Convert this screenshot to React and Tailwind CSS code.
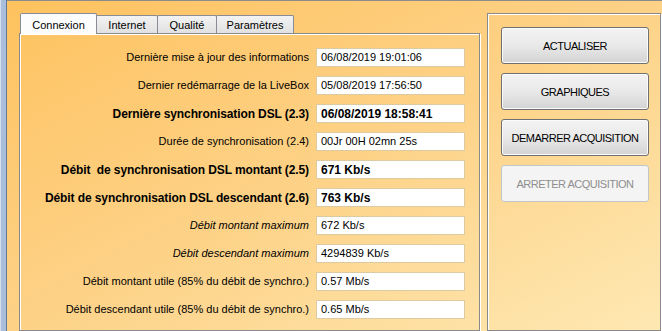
import React from 'react';

const rows = [
  { label: 'Dernière mise à jour des informations', value: '06/08/2019 19:01:06' },
  { label: 'Dernier redémarrage de la LiveBox', value: '05/08/2019 17:56:50' },
  { label: 'Dernière synchronisation DSL (2.3)', value: '06/08/2019 18:58:41', bold: true },
  { label: 'Durée de synchronisation (2.4)', value: '00Jr 00H 02mn 25s' },
  { label: 'Débit  de synchronisation DSL montant (2.5)', value: '671 Kb/s', bold: true },
  { label: 'Débit de synchronisation DSL descendant (2.6)', value: '763 Kb/s', bold: true },
  { label: 'Débit montant maximum', value: '672 Kb/s', italic: true },
  { label: 'Débit descendant maximum', value: '4294839 Kb/s', italic: true },
  { label: 'Débit montant utile (85% du débit de synchro.)', value: '0.57 Mb/s' },
  { label: 'Débit descendant utile (85% du débit de synchro.)', value: '0.65 Mb/s' },
];

const tabs = ['Connexion', 'Internet', 'Qualité', 'Paramètres'];

const Tab = ({ label, active, width }) => {
  if (active) {
    return (
      <div className={`relative z-10 -mb-px h-[21px] ${width} flex items-center justify-center pt-[2px] bg-[#fcfcfc] border border-b-0 border-[#898c95] rounded-t-[2px]`}>
        {label}
      </div>
    );
  }
  return (
    <div className={`h-[18px] ${width} -ml-px flex items-center justify-center pt-[2px] bg-linear-to-b from-[#f3f3f3] to-[#e1e1e1] border border-b-0 border-[#898c95] rounded-t-[2px]`}>
      {label}
    </div>
  );
};

const Button = ({ children, disabled }) => (
  <div
    className={
      disabled
        ? 'h-[37px] w-[148px] flex items-center justify-center pt-[1px] rounded-[3px] border border-[#c2c5c8] bg-[#f4f4f4] text-[#8e8e8e] tracking-[-0.5px]'
        : 'h-[37px] w-[148px] flex items-center justify-center pt-[1px] rounded-[3px] border border-[#707070] bg-linear-to-b from-[#f3f3f3] via-[#e9e9e9] to-[#d3d3d3] shadow-[inset_0_0_0_1px_#fbfbfb] tracking-[-0.5px]'
    }
  >
    {children}
  </div>
);

export default function App() {
  return (
    <div className="w-[662px] h-[331px] flex overflow-hidden text-[11px] text-black" style={{ fontFamily: '"Liberation Sans", Arial, sans-serif' }}>
      {/* cadre fenêtre */}
      <div className="w-[7px] shrink-0 bg-[#a9bedb] border-l border-[#d6e0ec] border-r border-r-[#60799a]" />

      <div className="flex-1 flex gap-[7px] pt-[12px] pl-[12px] border-t border-[#8c8c8c] bg-linear-to-br from-[#fec25e] via-[#fdd287] to-[#fee8b2]">
        {/* onglets + panneau */}
        <div className="w-[461px] shrink-0 flex flex-col">
          <div className="flex items-end pl-[1px]">
            <Tab label={tabs[0]} active width="w-[77px]" />
            <Tab label={tabs[1]} width="w-[62px]" />
            <Tab label={tabs[2]} width="w-[60px]" />
            <Tab label={tabs[3]} width="w-[78px]" />
          </div>
          <div className="flex-1 border border-[#8a8a8a] shadow-[inset_1px_1px_0_#ffffff,1px_1px_0_#ffffff] pt-[14px] pr-[14px] flex flex-col gap-[9px]">
            {rows.map((r) => (
              <div key={r.label} className="h-[19px] flex items-center justify-end gap-[7px]">
                <span className={`whitespace-pre ${r.bold ? 'font-bold text-[12px] tracking-[-0.1px]' : ''} ${r.italic ? 'italic' : ''}`}>{r.label}</span>
                <div className={`w-[149px] h-[19px] shrink-0 flex items-center pl-[4px] bg-white border border-[#dccaa2] ${r.bold ? 'font-bold text-[12px]' : ''}`}>
                  {r.value}
                </div>
              </div>
            ))}
          </div>
        </div>

        {/* boutons */}
        <div className="w-[174px] shrink-0 border border-[#8a8a8a] shadow-[inset_1px_1px_0_#ffffff,1px_1px_0_#ffffff] pt-[13px] px-[13px] flex flex-col gap-[9px]">
          <Button>ACTUALISER</Button>
          <Button>GRAPHIQUES</Button>
          <Button>DEMARRER ACQUISITION</Button>
          <Button disabled>ARRETER ACQUISITION</Button>
        </div>
      </div>
    </div>
  );
}
